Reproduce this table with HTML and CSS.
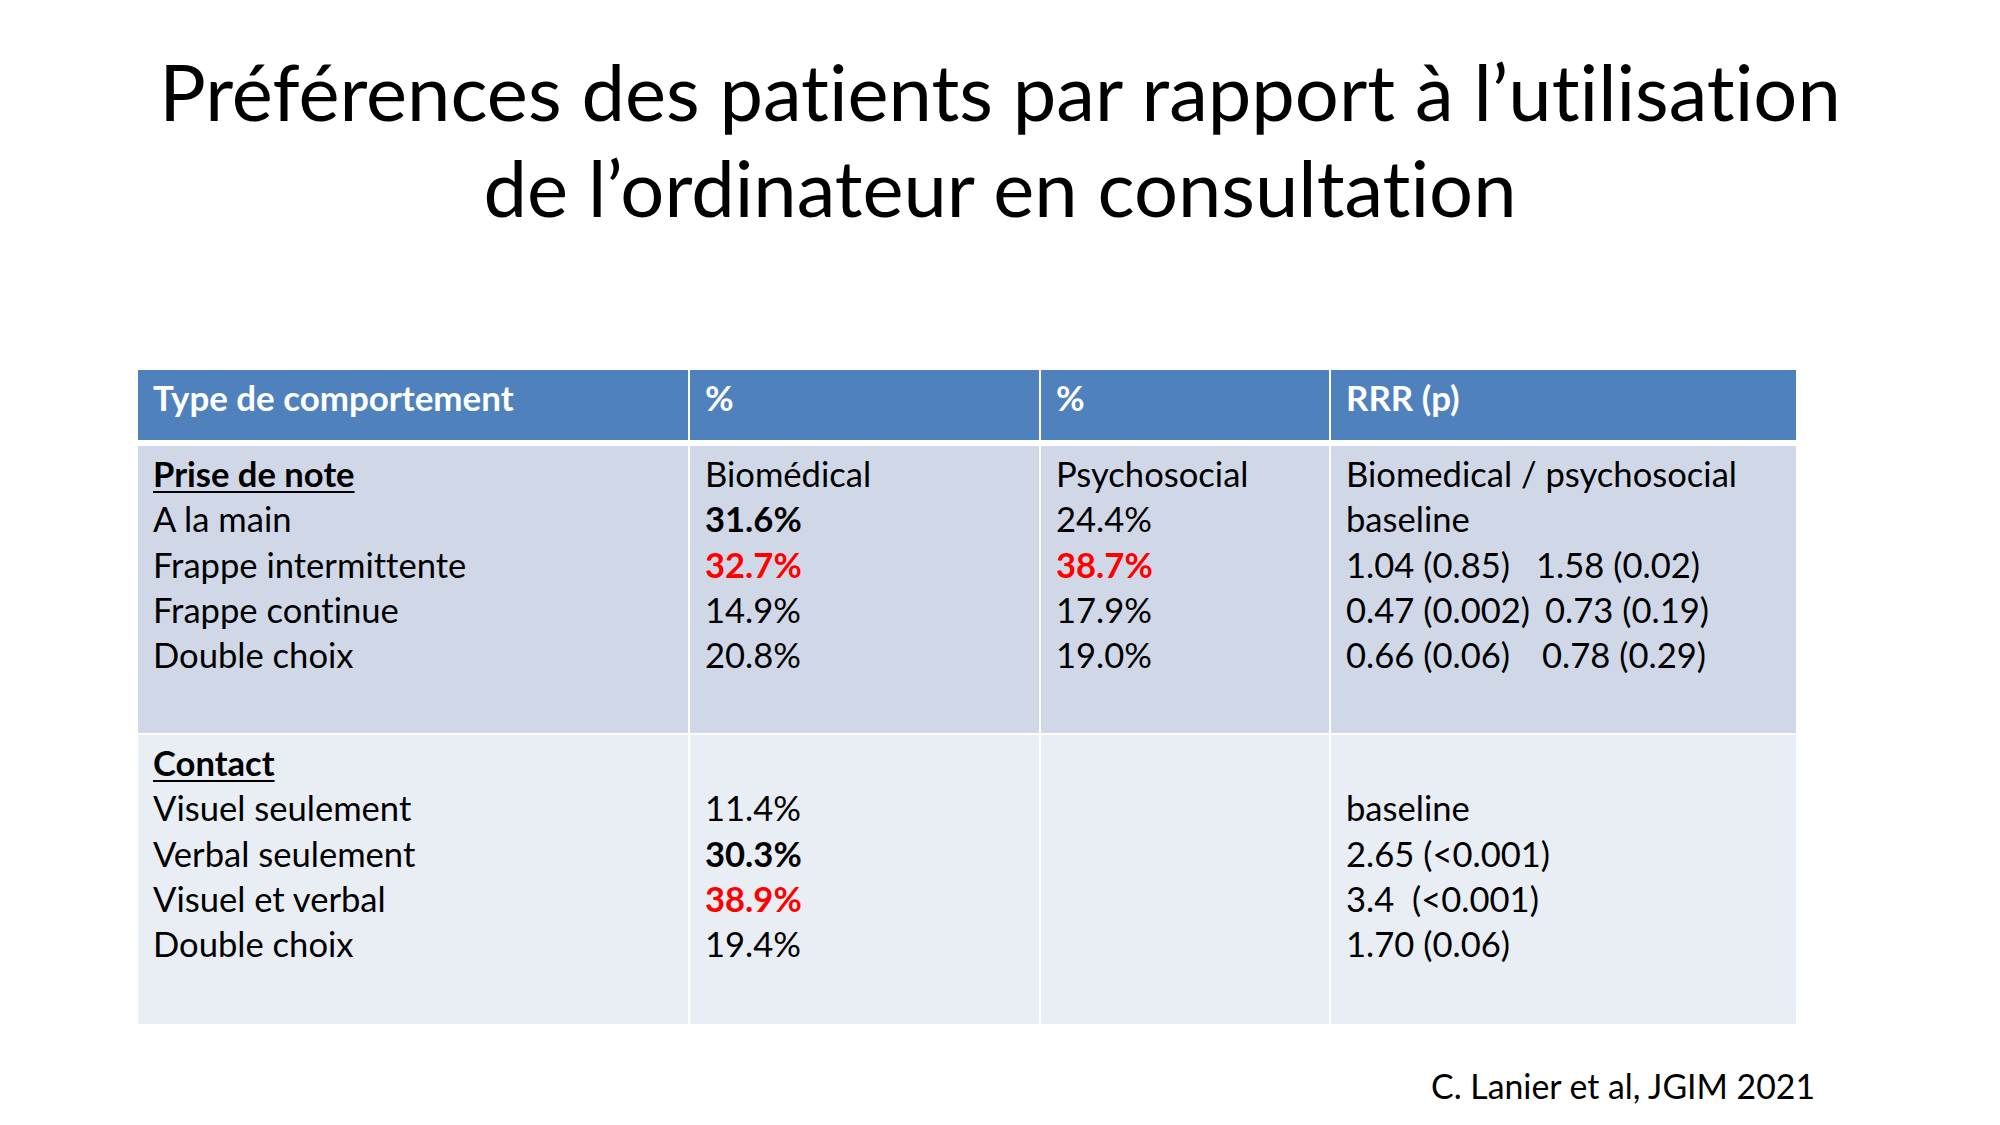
FILE: index.html
```html
<!DOCTYPE html>
<html lang="fr">
<head>
<meta charset="utf-8">
<title>Préférences des patients</title>
<link rel="stylesheet" href="styles.css">
</head>
<body>
<div class="slide">
  <h1 class="title">Préférences des patients par rapport à l’utilisation<br>de l’ordinateur en consultation</h1>

  <div class="table">
    <div class="row head">
      <div class="cell">Type de comportement</div>
      <div class="cell">%</div>
      <div class="cell">%</div>
      <div class="cell">RRR (p)</div>
    </div>
    <div class="row r1">
      <div class="cell">
        <div class="ln"><span class="sec">Prise de note</span></div>
        <div class="ln">A la main</div>
        <div class="ln">Frappe intermittente</div>
        <div class="ln">Frappe continue</div>
        <div class="ln">Double choix</div>
      </div>
      <div class="cell">
        <div class="ln">Biomédical</div>
        <div class="ln b">31.6%</div>
        <div class="ln b red">32.7%</div>
        <div class="ln">14.9%</div>
        <div class="ln">20.8%</div>
      </div>
      <div class="cell">
        <div class="ln">Psychosocial</div>
        <div class="ln">24.4%</div>
        <div class="ln b red">38.7%</div>
        <div class="ln">17.9%</div>
        <div class="ln">19.0%</div>
      </div>
      <div class="cell">
        <div class="ln">Biomedical / psychosocial</div>
        <div class="ln">baseline</div>
        <div class="ln"><span class="p1 w190">1.04 (0.85)</span>1.58 (0.02)</div>
        <div class="ln"><span class="p1 w199">0.47 (0.002)</span>0.73 (0.19)</div>
        <div class="ln"><span class="p1 w196">0.66 (0.06)</span>0.78 (0.29)</div>
      </div>
    </div>
    <div class="row r2">
      <div class="cell">
        <div class="ln"><span class="sec">Contact</span></div>
        <div class="ln">Visuel seulement</div>
        <div class="ln">Verbal seulement</div>
        <div class="ln">Visuel et verbal</div>
        <div class="ln">Double choix</div>
      </div>
      <div class="cell">
        <div class="ln">&nbsp;</div>
        <div class="ln">11.4%</div>
        <div class="ln b">30.3%</div>
        <div class="ln b red">38.9%</div>
        <div class="ln">19.4%</div>
      </div>
      <div class="cell"></div>
      <div class="cell">
        <div class="ln">&nbsp;</div>
        <div class="ln">baseline</div>
        <div class="ln">2.65 (&lt;0.001)</div>
        <div class="ln pre">3.4  (&lt;0.001)</div>
        <div class="ln">1.70 (0.06)</div>
      </div>
    </div>
  </div>

  <div class="source">C. Lanier et al, JGIM 2021</div>
</div>
</body>
</html>
```
FILE: styles.css
```css
html, body {
  margin: 0;
  padding: 0;
  background: #ffffff;
}
body {
  font-family: "Lato", "Liberation Sans", sans-serif;
  color: #000000;
  font-variant-ligatures: none;
}
.slide {
  width: 2000px;
  height: 1125px;
  overflow: hidden;
  display: flex;
  flex-direction: column;
}
.title {
  margin: 0;
  padding-top: 43px;
  font-weight: 400;
  font-size: 77.7px;
  line-height: 96px;
  text-align: center;
}
.table {
  margin-top: 135px;
  margin-left: 138px;
  width: 1658px;
  display: flex;
  flex-direction: column;
}
.row {
  display: grid;
  grid-template-columns: 550px 349px 288px 465px;
  column-gap: 2px;
}
.cell {
  padding: 5px 16px 0 15px;
  font-size: 34.6px;
  line-height: 45.3px;
}
.head {
  height: 70px;
  margin-bottom: 6px;
}
.head .cell {
  background: #4f81bd;
  color: #ffffff;
  font-weight: 700;
  font-size: 34.9px;
}
.r1 {
  height: 287px;
  margin-bottom: 2px;
}
.r1 .cell {
  background: #d0d8e8;
}
.r2 {
  height: 289px;
}
.r2 .cell {
  background: #e9edf4;
}
.ln {
  white-space: nowrap;
}
.pre {
  white-space: pre;
}
.b {
  font-weight: 700;
}
.red {
  color: #ff0000;
}
.sec {
  font-weight: 700;
  text-decoration: underline;
  text-decoration-thickness: 2px;
  text-underline-offset: 4px;
}
.p1 {
  display: inline-block;
}
.w190 { width: 190px; }
.w199 { width: 199px; }
.w196 { width: 196px; }
.source {
  margin-top: 40px;
  align-self: flex-end;
  margin-right: 185px;
  font-size: 33.8px;
  line-height: 45.3px;
}
```
